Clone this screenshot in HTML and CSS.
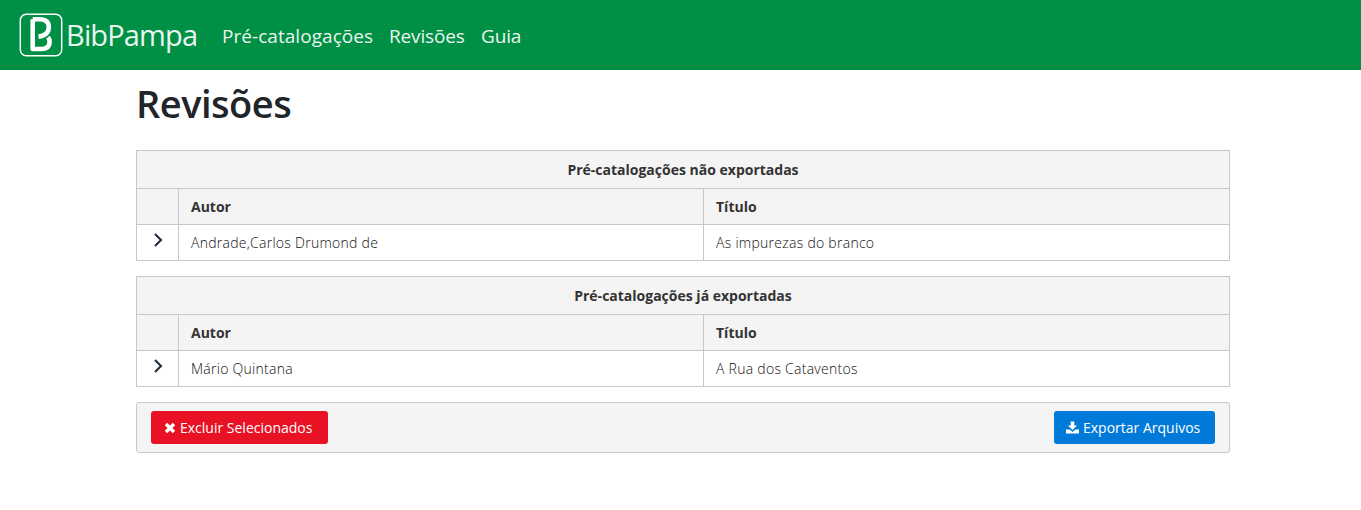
FILE: index.html
```
<!DOCTYPE html>
<html lang="pt-BR">
<head>
<meta charset="utf-8">
<title>BibPampa - Revisões</title>
<link rel="stylesheet" href="styles.css">
</head>
<body>
<nav class="navbar">
  <a class="brand">
    <svg class="logo" viewBox="0 0 44 44" width="44" height="44">
      <rect x="1.300" y="1.300" width="41.400" height="41.400" rx="6" fill="none" stroke="#fff" stroke-width="1.500"/>
      <path d="M13.700 6.200V36H22C27.500 36 30.600 33.500 30.600 29C30.600 27 30 25.500 29 24.300M13.700 6.200H20.500C26.500 6.200 29.800 9 29.800 14C29.800 19.500 26 22.800 19.500 23.800" fill="none" stroke="#fff" stroke-width="4.600" stroke-linejoin="round"/>
    </svg>
    <span class="brand-name">BibPampa</span>
  </a>
  <a class="nav-link nav-pre">Pré-catalogações</a>
  <a class="nav-link nav-rev">Revisões</a>
  <a class="nav-link nav-guia">Guia</a>
</nav>
<main class="container">
  <h1 class="title"><span>Revisões</span></h1>
  <section class="grid">
    <div class="caption"><span>Pré-catalogações não exportadas</span></div>
    <div class="row head"><div class="cell"></div><div class="cell">Autor</div><div class="cell">Título</div></div>
    <div class="row"><div class="cell toggle"><svg viewBox="0 0 10 14" width="10" height="14"><path d="M2 1L8 7L2 13" fill="none" stroke="#212f3d" stroke-width="2.100"/></svg></div><div class="cell">Andrade,Carlos Drumond de</div><div class="cell">As impurezas do branco</div></div>
  </section>
  <section class="grid">
    <div class="caption"><span>Pré-catalogações já exportadas</span></div>
    <div class="row head"><div class="cell"></div><div class="cell">Autor</div><div class="cell">Título</div></div>
    <div class="row"><div class="cell toggle"><svg viewBox="0 0 10 14" width="10" height="14"><path d="M2 1L8 7L2 13" fill="none" stroke="#212f3d" stroke-width="2.100"/></svg></div><div class="cell">Mário Quintana</div><div class="cell">A Rua dos Cataventos</div></div>
  </section>
  <div class="toolbar">
    <button class="btn danger">
      <svg viewBox="0 0 12 12" width="12" height="12"><path d="M2 2L10 10M10 2L2 10" stroke="#fff" stroke-width="3.400"/></svg>
      <span>Excluir Selecionados</span>
    </button>
    <button class="btn primary">
      <svg viewBox="0 0 13 13" width="13" height="13"><path d="M4.700 0.500H8.300V4.500H11L6.500 9L2 4.500H4.700ZM0 8.500H3.700L6.500 11L9.300 8.500H13V12.500H0Z" fill="#fff"/></svg>
      <span>Exportar Arquivos</span>
    </button>
  </div>
</main>
</body>
</html>
```
FILE: styles.css
```
* { box-sizing: border-box; }
body { margin: 0; background: #fff; color: #333; font-family: "Open Sans", "Noto Sans", sans-serif; font-size: 14px; }
.navbar { display: flex; align-items: center; height: 70px; padding: 0 19px; background: #009045; color: #e9f5ee; white-space: nowrap; }
.brand { display: flex; align-items: center; width: 203px; }
.logo { flex: none; }
.brand-name { margin-left: 3px; font-size: 29px; line-height: 40px; letter-spacing: -0.85px; }
.nav-link { padding-top: 2px; font-size: 19px; line-height: 30px; letter-spacing: -0.15px; }
.nav-pre { width: 167px; letter-spacing: 0.05px; }
.nav-rev { width: 92px; }
.container { width: 1094px; margin-left: 136px; }
.title { margin: 0; height: 80px; padding-top: 9px; color: #212529; font-size: 38px; line-height: 48px; font-weight: 600; letter-spacing: -0.5px; }
.grid { height: 111px; margin-bottom: 15px; border: 1px solid #c8c8c8; }
.caption { height: 37px; line-height: 38px; text-align: center; font-weight: 700; background: #f4f4f4; }
.row { display: grid; grid-template-columns: 41px 525px 1fr; height: 36px; border-top: 1px solid #c8c8c8; line-height: 36px; font-weight: 300; letter-spacing: 0.27px; color: #111; }
.head { background: #f4f4f4; color: #333; font-weight: 700; letter-spacing: 0; }
.cell { padding-left: 12px; }
.cell + .cell { border-left: 1px solid #c8c8c8; }
.toggle { padding: 8px 0 0 16px; line-height: 0; }
.toolbar { display: flex; justify-content: space-between; align-items: center; height: 51px; padding: 0 14px; border: 1px solid #c8c8c8; border-radius: 3px; background: #f4f4f4; }
.btn { display: flex; align-items: center; gap: 4px; height: 33px; padding: 0 12px; border: 0; border-radius: 3px; color: #fff; font: 400 14px/20px "Open Sans", "Noto Sans", sans-serif; white-space: nowrap; }
.danger { width: 177px; padding-left: 13px; background: #e91224; }
.primary { width: 161px; background: #007ad9; }
```
